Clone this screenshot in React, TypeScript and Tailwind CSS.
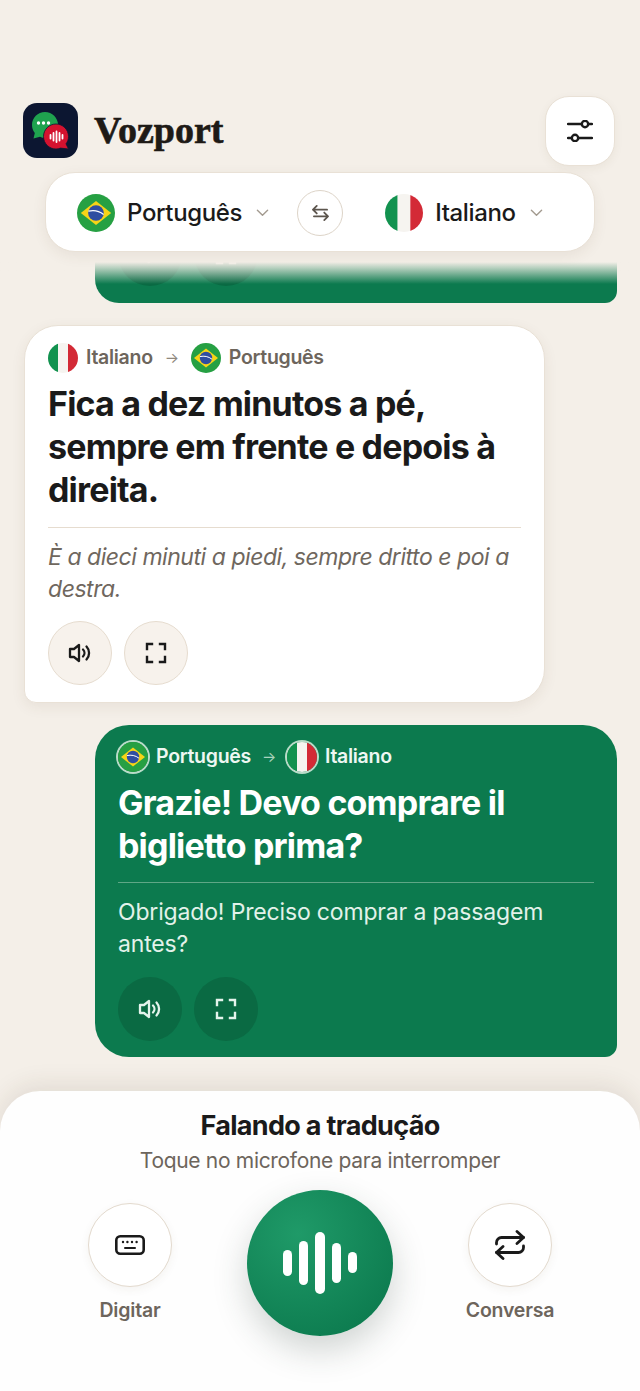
import type { ReactNode } from "react";

const sans = "font-['Inter','Noto_Sans',sans-serif]";

const BrazilFlag = () => (
  <svg viewBox="0 0 30 30" className="h-full w-full">
    <circle cx="15" cy="15" r="15" fill="#26a043" />
    <path d="M15 5.500 27 15 15 24.500 3 15Z" fill="#f7d417" />
    <circle cx="15" cy="15" r="6.200" fill="#2f4ea1" />
    <path d="M9 13.600c4-1 8.500-.2 12 2.600" fill="none" stroke="#fff" strokeWidth="1" />
  </svg>
);

const ItalyFlag = () => (
  <svg viewBox="0 0 30 30" className="h-full w-full">
    <clipPath id="it-clip">
      <circle cx="15" cy="15" r="15" />
    </clipPath>
    <g clipPath="url(#it-clip)">
      <rect width="10" height="30" fill="#12924f" />
      <rect x="10" width="10" height="30" fill="#f6f4f0" />
      <rect x="20" width="10" height="30" fill="#d32a36" />
    </g>
  </svg>
);

const VolumeIcon = () => (
  <svg viewBox="0 0 24 24" fill="none" stroke="currentColor" strokeWidth="2.300" strokeLinecap="round" strokeLinejoin="round" className="h-[24px] w-[24px]">
    <path d="M11 4v16l-5-4H2v-8h4Z" />
    <path d="M15 8.500a5 5 0 0 1 0 7" />
    <path d="M18.500 5.500a9.500 9.500 0 0 1 0 13" />
  </svg>
);

const FullscreenIcon = () => (
  <svg viewBox="0 0 24 24" fill="none" stroke="currentColor" strokeWidth="2.400" strokeLinecap="square" className="h-[24px] w-[24px]">
    <path d="M8 3H3v5M16 3h5v5M8 21H3v-5M16 21h5v-5" />
  </svg>
);

const Actions = ({ dark }: { dark?: boolean }) => {
  const cls = dark
    ? "bg-[#0a6a43] text-[#e4f4ec]"
    : "border border-[#e6dccf] bg-[#f7f2ec] text-[#1a1a1a]";
  return (
    <div className="flex gap-[12px]">
      <div className={`flex h-[64px] w-[64px] items-center justify-center rounded-full ${cls}`}>
        <VolumeIcon />
      </div>
      <div className={`flex h-[64px] w-[64px] items-center justify-center rounded-full ${cls}`}>
        <FullscreenIcon />
      </div>
    </div>
  );
};

type BubbleProps = {
  dark?: boolean;
  from: { flag: ReactNode; name: string };
  to: { flag: ReactNode; name: string };
  text: string;
  translation: string;
};

const Flag = ({ dark, children }: { dark?: boolean; children: ReactNode }) => (
  <div className={`h-[30px] w-[30px] shrink-0 rounded-full ${dark ? "ring-2 ring-[#b9dcc9]" : ""}`}>
    {children}
  </div>
);

const Bubble = ({ dark, from, to, text, translation }: BubbleProps) => (
  <div
    className={
      dark
        ? "ml-[95px] mr-[23px] rounded-tl-[34px] rounded-tr-[34px] rounded-bl-[34px] rounded-br-[12px] bg-[#0c7a4e] px-[23px] pb-[16px] pt-[17px] text-white"
        : "ml-[24px] mr-[95px] rounded-tl-[34px] rounded-tr-[34px] rounded-br-[34px] rounded-bl-[12px] border border-[#e9e1d6] bg-white px-[23px] pb-[17px] pt-[17px] text-[#1a1a1a] shadow-[0_4px_14px_rgba(90,70,40,0.08)]"
    }
  >
    <div className={`flex h-[30px] items-center text-[19.500px] font-semibold tracking-[-0.015em] ${dark ? "text-[#eef7f2]" : "text-[#6d655c]"}`}>
      <Flag dark={dark}>{from.flag}</Flag>
      <span className="ml-[8px]">{from.name}</span>
      <span className={`text-[15px] font-normal ${dark ? "mx-[11px] text-[#a9d3bd]" : "mx-[12px] text-[#8f877c]"}`}>→</span>
      <Flag dark={dark}>{to.flag}</Flag>
      <span className="ml-[8px]">{to.name}</span>
    </div>
    <p className="mt-[9px] whitespace-pre-line text-[34px] font-bold leading-[43px] tracking-[-0.024em]">{text}</p>
    <div className={`h-px ${dark ? "mt-[15px] bg-[#5fa786]" : "mt-[16px] bg-[#e6dccf]"}`} />
    <p className={`mt-[13px] whitespace-pre-line text-[23px] leading-[32px] ${dark ? "tracking-[-0.007em] text-[#e3f2ea]" : "italic tracking-[-0.02em] text-[#6f675e]"}`}>
      {translation}
    </p>
    <div className={dark ? "mt-[17px]" : "mt-[16px]"}>
      <Actions dark={dark} />
    </div>
  </div>
);

const Logo = () => (
  <svg viewBox="0 0 55 55" className="h-[55px] w-[55px]">
    <rect width="55" height="55" rx="14" fill="#0c1631" />
    <path d="M22 9C14.800 9 9 14.800 9 22c0 3 1 5.800 2.800 8L10.500 35.500 17 33.800c1.600.8 3.200 1.200 5 1.200 7.200 0 13-5.800 13-13S29.200 9 22 9Z" fill="#1fa24f" />
    <circle cx="15.500" cy="20" r="1.700" fill="#fff" />
    <circle cx="20.500" cy="20" r="1.700" fill="#fff" />
    <circle cx="25.500" cy="20" r="1.700" fill="#fff" />
    <path d="M33 21c-6.800 0-12.500 5.500-12.500 12.500S26.200 46 33 46c1.600 0 3.100-.3 4.500-.9L45.500 46 43 40.800c1.600-2 2.500-4.500 2.500-7.300C45.500 26.500 39.800 21 33 21Z" fill="#d4122f" stroke="#0c1631" strokeWidth="0.800" />
    <g stroke="#fff" strokeWidth="1.800" strokeLinecap="round">
      <path d="M27.500 32v3.500M30.500 30v7.500M33.500 28.500v10.500M36.500 30v7.500M39.500 32v3.500" />
    </g>
  </svg>
);

const SlidersIcon = () => (
  <svg viewBox="0 0 26 22" fill="none" stroke="#1a1a1a" strokeWidth="2.400" strokeLinecap="round" className="h-[22px] w-[26px]">
    <path d="M1 4h13.500M21.500 4H25M1 18h3.500M11.500 18H25" />
    <circle cx="18" cy="4" r="3.200" />
    <circle cx="8" cy="18" r="3.200" />
  </svg>
);

const Chevron = () => (
  <svg viewBox="0 0 14 8" fill="none" stroke="#a39b90" strokeWidth="1.500" strokeLinecap="round" strokeLinejoin="round" className="h-[8px] w-[13px]">
    <path d="m1.500 1 5.500 5.500L12.500 1" />
  </svg>
);

const SwapIcon = () => (
  <svg viewBox="0 0 20 17" fill="none" stroke="#5c554d" strokeWidth="1.900" strokeLinecap="round" strokeLinejoin="round" className="h-[16px] w-[19px]">
    <path d="M6 1 2 5l4 4M2 5h15M14 8l4 4-4 4M18 12H3" />
  </svg>
);

const KeyboardIcon = () => (
  <svg viewBox="0 0 30 20" className="h-[20px] w-[30px]">
    <rect x="1.300" y="1.300" width="27.400" height="17.400" rx="4" fill="none" stroke="#1a1a1a" strokeWidth="2.600" />
    <g fill="#1a1a1a">
      <circle cx="8" cy="7" r="1.200" />
      <circle cx="12.400" cy="7" r="1.200" />
      <circle cx="17" cy="7" r="1.200" />
      <circle cx="21.600" cy="7" r="1.200" />
      <rect x="9" y="12" width="12" height="2" rx="1" />
    </g>
  </svg>
);

const RepeatIcon = () => (
  <svg viewBox="0 0 30 30" fill="none" stroke="#1a1a1a" strokeWidth="2.800" strokeLinecap="round" strokeLinejoin="round" className="h-[30px] w-[30px]">
    <path d="m22 1.500 6.500 6-6.500 6" />
    <path d="M1.500 14v-1.500a5 5 0 0 1 5-5h22" />
    <path d="m8 28.500-6.500-6 6.500-6" />
    <path d="M28.500 16v1.500a5 5 0 0 1-5 5h-22" />
  </svg>
);

const WaveIcon = () => (
  <svg viewBox="0 0 74 62" fill="#fff" className="h-[62px] w-[74px]">
    <rect x="0" y="18" width="9" height="26" rx="4.500" />
    <rect x="16" y="9" width="9" height="44" rx="4.500" />
    <rect x="32" y="0" width="10" height="62" rx="5" />
    <rect x="49" y="11" width="9" height="40" rx="4.500" />
    <rect x="65" y="20" width="9" height="21" rx="4.500" />
  </svg>
);

const LangSelect = ({ flag, name }: { flag: ReactNode; name: string }) => (
  <div className="flex items-center">
    <div className="h-[38px] w-[38px] shrink-0">{flag}</div>
    <span className="ml-[12px] text-[24px] font-medium tracking-[-0.015em] text-[#1a1a1a]">{name}</span>
    <div className="ml-[14px]">
      <Chevron />
    </div>
  </div>
);

const SideAction = ({ icon, label }: { icon: ReactNode; label: string }) => (
  <div className="flex w-[120px] flex-col items-center">
    <div className="flex h-[84px] w-[84px] items-center justify-center rounded-full border border-[#e3dace] bg-white shadow-[0_3px_10px_rgba(90,70,40,0.06)]">
      {icon}
    </div>
    <span className="mt-[9px] text-[19.500px] font-semibold tracking-[-0.01em] text-[#6d655c]">{label}</span>
  </div>
);

export default function App() {
  const pt = { flag: <BrazilFlag />, name: "Português" };
  const it = { flag: <ItalyFlag />, name: "Italiano" };
  return (
    <div className={`flex h-screen w-full flex-col overflow-hidden bg-[#f4efe8] ${sans}`}>
      <header className="flex items-center justify-between pl-[23px] pr-[25px] pt-[96px]">
        <div className="flex items-center gap-[16px]">
          <div className="mb-[1px]">
            <Logo />
          </div>
          <span className="mb-[3px] font-['Liberation_Serif',serif] text-[38px] font-bold leading-none text-[#1e1a16] [-webkit-text-stroke:0.6px_#1e1a16]">
            Vozport
          </span>
        </div>
        <div className="flex h-[70px] w-[70px] items-center justify-center rounded-[24px] border border-[#e9e1d6] bg-white shadow-[0_3px_10px_rgba(90,70,40,0.06)]">
          <SlidersIcon />
        </div>
      </header>

      <div className="relative z-10 mx-[45px] mt-[6px] flex h-[80px] shrink-0 items-center rounded-[30px] border border-[#e9e1d6] bg-white pl-[31px] pt-[2px] shadow-[0_4px_14px_rgba(90,70,40,0.08)]">
        <LangSelect flag={<BrazilFlag />} name="Português" />
        <div className="ml-[28px] mr-[42px] flex h-[46px] w-[46px] items-center justify-center rounded-full border border-[#ddd4c8] bg-white">
          <SwapIcon />
        </div>
        <LangSelect flag={<ItalyFlag />} name="Italiano" />
      </div>

      <div className="relative mt-[10px] flex min-h-0 flex-1 flex-col justify-end gap-[22px] overflow-hidden pb-[34px]">
        <div className="ml-[95px] mr-[23px] shrink-0 rounded-bl-[24px] rounded-br-[12px] bg-[#0c7a4e] px-[23px] pb-[17px]">
          <Actions dark />
        </div>
        <div className="shrink-0">
          <Bubble
            from={it}
            to={pt}
            text={"Fica a dez minutos a pé,\nsempre em frente e depois à\ndireita."}
            translation={"È a dieci minuti a piedi, sempre dritto e poi a\ndestra."}
          />
        </div>
        <div className="shrink-0">
          <Bubble
            dark
            from={pt}
            to={it}
            text={"Grazie! Devo comprare il\nbiglietto prima?"}
            translation={"Obrigado! Preciso comprar a passagem\nantes?"}
          />
        </div>
        <div className="absolute inset-x-0 top-0 h-[22px] bg-gradient-to-b from-[#f4efe8] to-transparent" />
      </div>

      <div className="relative z-10 h-[300px] shrink-0 rounded-t-[40px] bg-[#fefefe] pt-[17px] shadow-[0_-6px_24px_rgba(70,50,30,0.10)]">
        <p className="text-center text-[27px] font-bold leading-[36px] tracking-[-0.025em] text-[#1a1a1a]">Falando a tradução</p>
        <p className="mt-[1px] text-center text-[21px] leading-[32px] tracking-[-0.015em] text-[#6d655c]">Toque no microfone para interromper</p>
        <div className="mt-[13px] flex items-start justify-center">
          <div className="mt-[13px]">
            <SideAction icon={<KeyboardIcon />} label="Digitar" />
          </div>
          <div className="mx-[57px] flex h-[146px] w-[146px] items-center justify-center rounded-full bg-[radial-gradient(circle_at_35%_30%,#1f9a68,#0c7a4e_85%)] shadow-[0_14px_34px_rgba(40,60,50,0.22)]">
            <WaveIcon />
          </div>
          <div className="mt-[13px]">
            <SideAction icon={<RepeatIcon />} label="Conversa" />
          </div>
        </div>
      </div>
    </div>
  );
}
